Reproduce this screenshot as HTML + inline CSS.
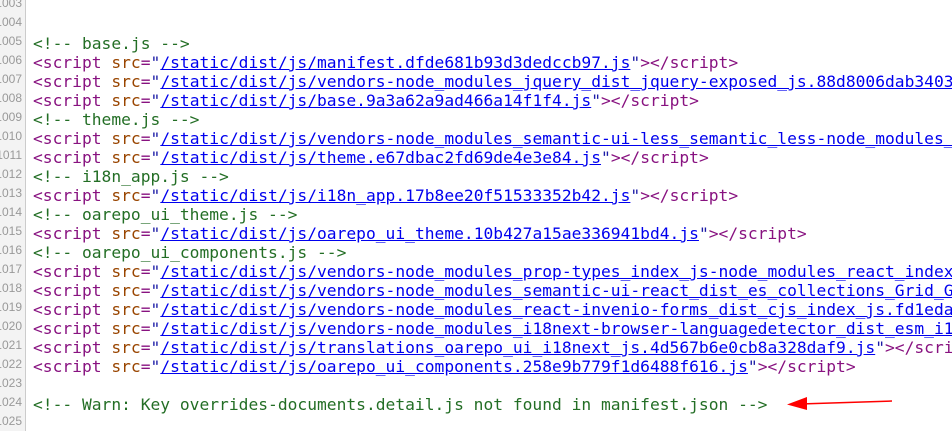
<!DOCTYPE html><html><head><style>
body{margin:0;width:952px;height:431px;overflow:hidden;background:#fff;position:relative}
.g{position:absolute;left:0;top:0;width:25px;height:431px;background:#f3f3f3;border-right:1px solid #ccc}
.row{position:absolute;left:0;height:19px;line-height:19px;white-space:pre}
.n{position:absolute;left:0;width:22px;text-align:right;font:12px "Liberation Sans",sans-serif;color:#999;overflow:hidden;direction:rtl}
.c{position:absolute;left:33px;font:16.27px "DejaVu Sans Mono",monospace;color:#881280}
.cm{color:#236e25}.a{color:#994500}.v{color:#1a1aa6}.l{color:#0000ee;text-decoration:underline}
</style></head><body><div class="g"></div>
<div id="r"></div>
<script>
var L=[
["1003",""],["1004",""],
["1005",'<span class="cm">&lt;!-- base.js --&gt;</span>'],
["1006","S/static/dist/js/manifest.dfde681b93d3dedccb97.jsE"],
["1007","S/static/dist/js/vendors-node_modules_jquery_dist_jquery-exposed_js.88d8006dab3403"],
["1008","S/static/dist/js/base.9a3a62a9ad466a14f1f4.jsE"],
["1009",'<span class="cm">&lt;!-- theme.js --&gt;</span>'],
["1010","S/static/dist/js/vendors-node_modules_semantic-ui-less_semantic_less-node_modules_"],
["1011","S/static/dist/js/theme.e67dbac2fd69de4e3e84.jsE"],
["1012",'<span class="cm">&lt;!-- i18n_app.js --&gt;</span>'],
["1013","S/static/dist/js/i18n_app.17b8ee20f51533352b42.jsE"],
["1014",'<span class="cm">&lt;!-- oarepo_ui_theme.js --&gt;</span>'],
["1015","S/static/dist/js/oarepo_ui_theme.10b427a15ae336941bd4.jsE"],
["1016",'<span class="cm">&lt;!-- oarepo_ui_components.js --&gt;</span>'],
["1017","S/static/dist/js/vendors-node_modules_prop-types_index_js-node_modules_react_index"],
["1018","S/static/dist/js/vendors-node_modules_semantic-ui-react_dist_es_collections_Grid_G"],
["1019","S/static/dist/js/vendors-node_modules_react-invenio-forms_dist_cjs_index_js.fd1eda"],
["1020","S/static/dist/js/vendors-node_modules_i18next-browser-languagedetector_dist_esm_i1"],
["1021","S/static/dist/js/translations_oarepo_ui_i18next_js.4d567b6e0cb8a328daf9.jsE"],
["1022","S/static/dist/js/oarepo_ui_components.258e9b779f1d6488f616.jsE"],
["1023",""],
["1024",'<span class="cm">&lt;!-- Warn: Key overrides-documents.detail.js not found in manifest.json --&gt;</span>'],
["1025",""]];
var h="";
L.forEach(function(x,i){var t=x[1];
if(t[0]=="S"){var e=t.slice(-1)=="E";var u=e?t.slice(1,-1):t.slice(1);
t='&lt;script <span class="a">src</span>=<span class="v">"</span><span class="l">'+u+'</span>'+(e?'<span class="v">"</span>&gt;&lt;/script&gt;':'');}
h+='<div class="row" style="top:'+(-4+i*19)+'px"><span class="n">'+x[0]+'</span><span class="c">'+t+'</span></div>';});
document.getElementById("r").innerHTML=h;
</script>
<svg style="position:absolute;left:0;top:0" width="952" height="431"><line x1="800" y1="404" x2="892" y2="401" stroke="#f00" stroke-width="1.5"/><polygon points="787,404.5 807,397 807,410" fill="#f00"/></svg>
</body></html>
